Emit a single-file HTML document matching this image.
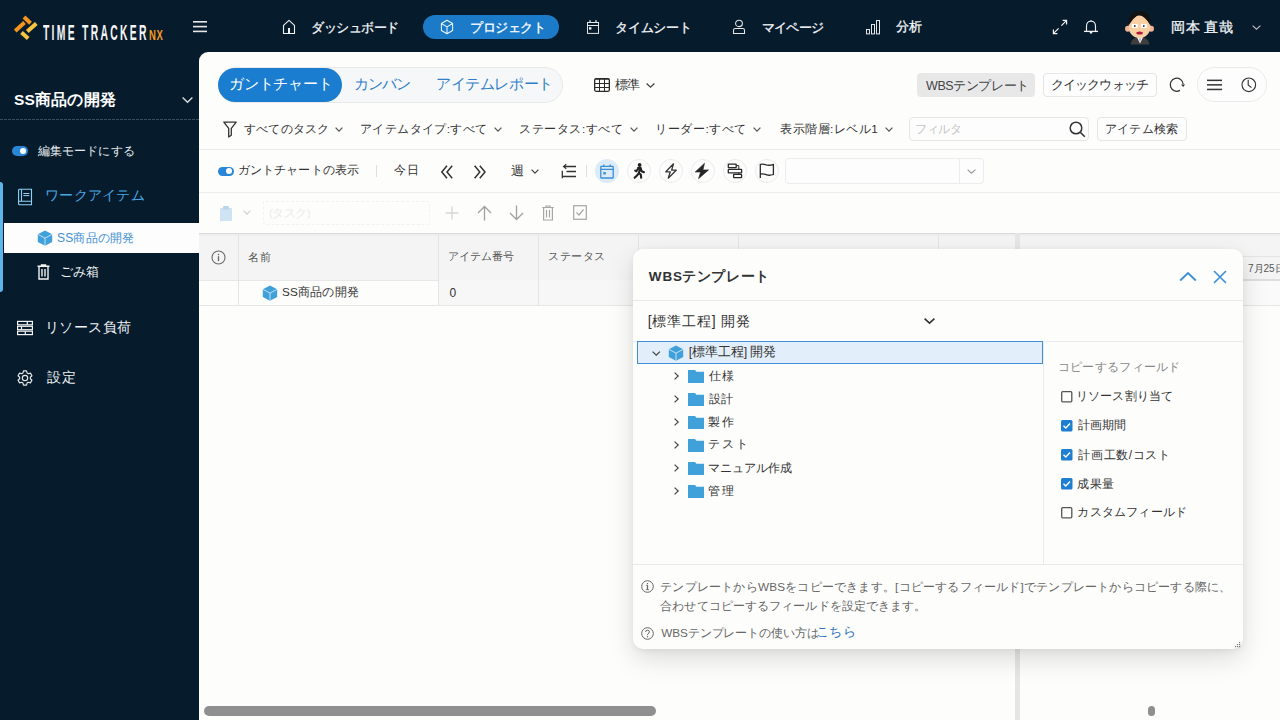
<!DOCTYPE html>
<html lang="ja"><head><meta charset="utf-8"><title>WBSテンプレート</title>
<style>
html,body{margin:0;padding:0;width:1280px;height:720px;overflow:hidden;background:#061c2d;}
body{position:relative;font-family:"Liberation Sans",sans-serif;}
.b{position:absolute;}
.i{position:absolute;overflow:visible;}
.t{position:absolute;white-space:nowrap;}
</style></head><body>
<div class="b" style="left:0px;top:0px;width:1280px;height:720px;background:#061c2d"></div><div class="b" style="left:199px;top:52px;width:1081px;height:668px;background:#fdfdfc;border-top-left-radius:9px;overflow:hidden"></div><svg class="i" style="left:10px;top:12px;" width="32" height="30" viewBox="0 0 32 30"><path d="M14 5 L20.5 11.2" stroke="#f7941d" stroke-width="4"/><path d="M5.2 19 L14.5 10.6" stroke="#f7941d" stroke-width="4"/><path d="M17.3 19.6 L26.3 11.4" stroke="#f9c440" stroke-width="4"/><path d="M11.5 20.6 L18.2 26.4" stroke="#f9c440" stroke-width="4"/></svg><span class="t" style="left:43px;top:20.6px;font-size:22.5px;line-height:24px;color:#f4f4f4;font-weight:bold;letter-spacing:5px;transform:scaleX(0.46);transform-origin:0 0">TIME TRACKER</span><span class="t" style="left:149px;top:27px;font-size:14px;line-height:16px;color:#f39a1e;font-weight:bold;letter-spacing:1px;transform:scaleX(0.68);transform-origin:0 0">NX</span><svg class="i" style="left:193px;top:20px;" width="14" height="13" viewBox="0 0 14 13"><rect x="0" y="1" width="14" height="1.6" fill="#e8e8e8"/><rect x="0" y="5.8" width="14" height="1.6" fill="#e8e8e8"/><rect x="0" y="10.6" width="14" height="1.6" fill="#e8e8e8"/></svg><svg class="i" style="left:282px;top:19px;" width="14" height="16" viewBox="0 0 14 16"><path d="M1.5 14.5 V6.3 L7 1.4 L12.5 6.3 V14.5 Z" fill="none" stroke="#f0f0f0" stroke-width="1.1" stroke-linejoin="round"/><rect x="6" y="9" width="2" height="5.6" fill="#f0f0f0"/></svg><div class="b" style="left:423px;top:15px;width:136px;height:24px;background:#1b7bc9;border-radius:12px"></div><svg class="i" style="left:440px;top:19px;" width="14" height="16" viewBox="0 0 14 16"><path d="M7 1.3 L12.6 4.5 V11.5 L7 14.7 L1.4 11.5 V4.5 Z M1.4 4.5 L7 7.9 L12.6 4.5 M7 7.9 V14.7" fill="none" stroke="#eef5fb" stroke-width="1.05" stroke-linejoin="round"/></svg><svg class="i" style="left:586px;top:19px;" width="14" height="16" viewBox="0 0 14 16"><rect x="1.5" y="3.5" width="11" height="10.9" fill="none" stroke="#e6e6e6" stroke-width="1"/><path d="M1.5 6.5 H12.5" stroke="#e6e6e6" stroke-width="1"/><rect x="3.4" y="1.2" width="1.3" height="2.5" fill="#e6e6e6"/><rect x="9.3" y="1.2" width="1.3" height="2.5" fill="#e6e6e6"/><rect x="3" y="8.2" width="2.4" height="2.4" fill="#f4f4f4"/></svg><svg class="i" style="left:732px;top:19px;" width="14" height="16" viewBox="0 0 14 16"><ellipse cx="7" cy="4.4" rx="3.4" ry="3.2" fill="none" stroke="#e6e6e6" stroke-width="1.05"/><path d="M1.5 14.5 V11.3 Q1.5 9.5 3.3 9.5 H10.7 Q12.5 9.5 12.5 11.3 V14.5 Z" fill="none" stroke="#e6e6e6" stroke-width="1.05"/></svg><svg class="i" style="left:865px;top:19px;" width="16" height="16" viewBox="0 0 16 16"><g fill="none" stroke="#e6e6e6" stroke-width="1"><rect x="1.5" y="10.5" width="3" height="4.4"/><rect x="6.5" y="5.5" width="3" height="9.4"/><rect x="11.5" y="1.5" width="3" height="13.4"/></g></svg><svg class="i" style="left:1052px;top:19px;" width="16" height="16" viewBox="0 0 16 16"><path d="M1.3 14.7 L6.6 9.4 M9.4 6.6 L14.7 1.3 M10.6 1.4 H14.6 V5.4 M1.4 10.6 V14.6 H5.4" fill="none" stroke="#f2f2f2" stroke-width="1.2"/></svg><svg class="i" style="left:1083px;top:19px;" width="16" height="16" viewBox="0 0 16 16"><path d="M3.5 12 V7.2 Q3.5 2.2 8 2.2 Q12.5 2.2 12.5 7.2 V12" fill="none" stroke="#eee" stroke-width="1.15"/><path d="M1 12.4 H15" stroke="#f2f2f2" stroke-width="1.3"/><path d="M6.4 13 L8 15.2 L9.6 13 Z" fill="#f2f2f2"/><rect x="7.4" y="1" width="1.2" height="1.4" fill="#ddd"/></svg><svg class="i" style="left:1120px;top:8px;" width="40" height="38" viewBox="0 0 40 38"><path d="M10.5 36.5 Q11.5 29 20 29 Q28.5 29 29.5 36.5 Z" fill="#3e3e3e"/><path d="M16.8 29 L20 35.5 L23.2 29 Z" fill="#f4f4f4"/><path d="M19.3 30.5 L20 35 L20.7 30.5 Z" fill="#9a80c8"/><ellipse cx="7.8" cy="20.8" rx="2.8" ry="3" fill="#f4b393"/><ellipse cx="31.2" cy="20.8" rx="2.8" ry="3" fill="#f4b393"/><ellipse cx="19.5" cy="18.8" rx="11" ry="11.2" fill="#f9cfa4"/><path d="M8.6 18 Q7.6 3 19.5 3 Q31.4 3 30.6 17 L29.8 16.5 Q25 8.5 18.5 6.6 Q13.5 10 9.6 16 Z" fill="#121212"/><rect x="11.8" y="16" width="6" height="4" rx="0.8" fill="#fff"/><rect x="20.8" y="16" width="6" height="4" rx="0.8" fill="#fff"/><circle cx="14.8" cy="18" r="0.9" fill="#333"/><circle cx="23.8" cy="18" r="0.9" fill="#333"/><ellipse cx="19.6" cy="25" rx="3.2" ry="1.5" fill="#b51a3c"/></svg><svg class="i" style="left:1252px;top:25px;" width="9" height="5" viewBox="0 0 9 5"><path d="M0.6 0.6 L4.5 4.2 L8.4 0.6" fill="none" stroke="#bbb" stroke-width="1.2"/></svg><span class="t" style="left:311.0px;top:21.5px;font-size:12.5px;line-height:12.5px;letter-spacing:-0.5px;color:#f4f6f8;font-weight:normal;-webkit-text-stroke:0.3px currentColor">ダッシュボード</span><span class="t" style="left:470.0px;top:22.0px;font-size:12.5px;line-height:12.5px;letter-spacing:-0.4px;color:#fff;font-weight:normal;-webkit-text-stroke:0.3px currentColor">プロジェクト</span><span class="t" style="left:615.0px;top:21.5px;font-size:12.5px;line-height:12.5px;letter-spacing:-0.2px;color:#f4f6f8;font-weight:normal;-webkit-text-stroke:0.3px currentColor">タイムシート</span><span class="t" style="left:762.0px;top:21.5px;font-size:12.5px;line-height:12.5px;letter-spacing:-0.8px;color:#f4f6f8;font-weight:normal;-webkit-text-stroke:0.3px currentColor">マイページ</span><span class="t" style="left:896.0px;top:21.0px;font-size:12.5px;line-height:12.5px;letter-spacing:0.0px;color:#f4f6f8;font-weight:normal;-webkit-text-stroke:0.3px currentColor">分析</span><span class="t" style="left:1171.0px;top:20.5px;font-size:13.5px;line-height:13.5px;letter-spacing:0.5px;color:#f4f6f8;font-weight:normal;-webkit-text-stroke:0.3px currentColor">岡本 直哉</span><span class="t" style="left:14.0px;top:92.0px;font-size:15.5px;line-height:15.5px;letter-spacing:0.2px;color:#fff;font-weight:bold;">SS商品の開発</span><svg class="i" style="left:182px;top:97px;" width="11" height="6" viewBox="0 0 11 6"><path d="M0.6 0.6 L5.5 5.2 L10.4 0.6" fill="none" stroke="#ddd" stroke-width="1.4"/></svg><div class="b" style="left:0px;top:119px;width:199px;height:1px;background:repeating-linear-gradient(90deg,#3a4b5b 0 3px,transparent 3px 4px)"></div><div class="b" style="left:12px;top:146px;width:16px;height:10px;background:#2a86d6;border-radius:5px"></div><div class="b" style="left:20.2px;top:148px;width:6.2px;height:6px;background:#fff;border-radius:50%"></div><span class="t" style="left:38.0px;top:146.0px;font-size:11.5px;line-height:11.5px;letter-spacing:0.1px;color:#e8ecef;font-weight:normal;">編集モードにする</span><div class="b" style="left:0px;top:182px;width:3px;height:110px;background:#5cb6ea;border-radius:0 3px 3px 0"></div><svg class="i" style="left:17px;top:188px;" width="16" height="18" viewBox="0 0 16 18"><g fill="none" stroke="#92d0f3" stroke-width="1.1"><path d="M1.6 2 Q1.6 1.2 2.6 1.2 H14.5 V16.8 H2.6 Q1.6 16.8 1.6 15.8 Z"/><path d="M4.5 1.2 V13.3 M1.6 13.3 H14.5"/><path d="M6.3 5.5 H12.4 M6.3 7.6 H12.4" stroke-width="1"/></g></svg><span class="t" style="left:45.0px;top:188.0px;font-size:14.0px;line-height:14.0px;letter-spacing:0.3px;color:#4aa6e3;font-weight:normal;">ワークアイテム</span><div class="b" style="left:4px;top:223px;width:195px;height:30px;background:#fdfdfd"></div><svg class="i" style="left:37px;top:230px;" width="16" height="16" viewBox="0 0 16 16"><path d="M8 0.5 L15.2 4.3 V12 L8 15.8 L0.8 12 V4.3 Z" fill="#40a0d9"/><path d="M0.8 4.3 L8 8.1 L15.2 4.3 M8 8.1 V15.8" fill="none" stroke="#cfe6f6" stroke-width="0.9"/></svg><span class="t" style="left:57.0px;top:231.5px;font-size:12.0px;line-height:12.0px;letter-spacing:0.2px;color:#3d8fd3;font-weight:normal;">SS商品の開発</span><svg class="i" style="left:37px;top:264px;" width="13" height="16" viewBox="0 0 13 16"><path d="M0.5 2.3 H12.5 M4.5 2.3 V1 H8.5 V2.3 M2 2.3 V15 H11 V2.3 M5 5 V12.5 M8 5 V12.5" fill="none" stroke="#f4f4f4" stroke-width="1.4"/></svg><span class="t" style="left:60.0px;top:265.5px;font-size:12.5px;line-height:12.5px;letter-spacing:0.0px;color:#f0f2f4;font-weight:normal;">ごみ箱</span><svg class="i" style="left:17px;top:320px;" width="16" height="16" viewBox="0 0 16 16"><g fill="none" stroke="#f4f4f4" stroke-width="1.2"><rect x="0.6" y="1.4" width="14.8" height="3.4"/><rect x="0.6" y="6.3" width="14.8" height="3.4"/><rect x="0.6" y="11.2" width="14.8" height="3.4"/><path d="M10.3 1.4 V4.8 M4.5 6.3 V9.7 M8.3 11.2 V14.6"/></g></svg><span class="t" style="left:45.0px;top:319.5px;font-size:14.0px;line-height:14.0px;letter-spacing:0.4px;color:#f0f2f4;font-weight:normal;">リソース負荷</span><svg class="i" style="left:17px;top:370px;" width="16" height="16" viewBox="0 0 16 16"><path d="M5.98 2.99 L6.48 0.86 L9.52 0.86 L10.02 2.99 L11.32 3.74 L13.42 3.12 L14.94 5.74 L13.35 7.25 L13.35 8.75 L14.94 10.26 L13.42 12.88 L11.32 12.26 L10.02 13.01 L9.52 15.14 L6.48 15.14 L5.98 13.01 L4.68 12.26 L2.58 12.88 L1.06 10.26 L2.65 8.75 L2.65 7.25 L1.06 5.74 L2.58 3.12 L4.68 3.74 Z" fill="none" stroke="#e8e8e8" stroke-width="1.15" stroke-linejoin="round"/><circle cx="8" cy="8" r="2.7" fill="none" stroke="#e8e8e8" stroke-width="1.15"/></svg><span class="t" style="left:47.0px;top:370.5px;font-size:13.5px;line-height:13.5px;letter-spacing:1.0px;color:#f0f2f4;font-weight:normal;">設定</span><div class="b" style="left:218px;top:67px;width:343px;height:34px;background:#f6f7f8;border:1px solid #e9e9e9;border-radius:18px"></div><div class="b" style="left:218px;top:68px;width:124px;height:34px;background:#1b7dcf;border-radius:17px"></div><span class="t" style="left:229.0px;top:77.0px;font-size:14.5px;line-height:14.5px;letter-spacing:-0.2px;color:#fff;font-weight:normal;">ガントチャート</span><span class="t" style="left:353.5px;top:76.5px;font-size:14.5px;line-height:14.5px;letter-spacing:-0.8px;color:#2f7fc9;font-weight:normal;">カンバン</span><span class="t" style="left:436.0px;top:77.0px;font-size:14.5px;line-height:14.5px;letter-spacing:-0.4px;color:#2f7fc9;font-weight:normal;">アイテムレポート</span><svg class="i" style="left:594px;top:78px;" width="16" height="14" viewBox="0 0 16 14"><rect x="0.65" y="0.65" width="14.7" height="12.7" rx="1.6" fill="none" stroke="#2a2a2a" stroke-width="1.3"/><path d="M0.8 1.1 H15.2" stroke="#2a2a2a" stroke-width="1.2"/><path d="M5.5 1 V13 M10.5 1 V13 M1 5.5 H15 M1 9.5 H15" stroke="#2a2a2a" stroke-width="1"/></svg><span class="t" style="left:615.0px;top:77.5px;font-size:13.0px;line-height:13.0px;letter-spacing:-1.0px;color:#333;font-weight:normal;">標準</span><svg class="i" style="left:646px;top:83px;" width="9" height="5" viewBox="0 0 9 5"><path d="M0.6 0.6 L4.5 4.2 L8.4 0.6" fill="none" stroke="#444" stroke-width="1.3"/></svg><div class="b" style="left:917px;top:73px;width:118px;height:24px;background:#e8e8e8;border-radius:4px"></div><span class="t" style="left:926.0px;top:80.0px;font-size:12.5px;line-height:12.5px;letter-spacing:-0.4px;color:#444;font-weight:normal;">WBSテンプレート</span><div class="b" style="left:1043px;top:73px;width:114px;height:24px;background:#fdfdfd;border:1px solid #e6e6e6;border-radius:4px;box-sizing:border-box"></div><span class="t" style="left:1051.0px;top:78.5px;font-size:12.5px;line-height:12.5px;letter-spacing:-0.9px;color:#333;font-weight:normal;">クイックウォッチ</span><svg class="i" style="left:1168px;top:77px;" width="17" height="16" viewBox="0 0 17 16"><path d="M15.2 7.2 A6.5 6.5 0 1 0 11.9 13.4" fill="none" stroke="#333" stroke-width="1.25"/><path d="M13 7.4 H17.2 L15.1 10 Z" fill="#333"/></svg><div class="b" style="left:1197px;top:67px;width:70px;height:35px;background:#fdfdfd;border:1px solid #ebebeb;border-radius:18px;box-sizing:border-box"></div><svg class="i" style="left:1206px;top:78px;" width="17" height="14" viewBox="0 0 17 14"><rect x="1" y="1.6" width="15" height="1.5" fill="#333"/><rect x="1" y="6.1" width="15" height="1.5" fill="#333"/><rect x="1" y="10.7" width="15" height="1.5" fill="#333"/></svg><svg class="i" style="left:1240px;top:76px;" width="18" height="18" viewBox="0 0 18 18"><circle cx="8.8" cy="8.8" r="6.8" fill="none" stroke="#333" stroke-width="1.15"/><path d="M8.2 3.8 V9 L11.5 11.6" fill="none" stroke="#333" stroke-width="1.15"/></svg><svg class="i" style="left:223px;top:120.5px;" width="14" height="17" viewBox="0 0 14 17"><path d="M0.8 1.1 H13.2 L8.3 7.4 V14.2 L5.7 16 V7.4 Z" fill="none" stroke="#333" stroke-width="1.3" stroke-linejoin="round"/></svg><span class="t" style="left:244.0px;top:122.5px;font-size:11.75px;line-height:11.75px;letter-spacing:0.2px;color:#333;font-weight:normal;">すべてのタスク</span><span class="t" style="left:360.0px;top:123.0px;font-size:11.75px;line-height:11.75px;letter-spacing:0.4px;color:#333;font-weight:normal;">アイテムタイプ:すべて</span><span class="t" style="left:519.0px;top:122.5px;font-size:11.75px;line-height:11.75px;letter-spacing:0.6px;color:#333;font-weight:normal;">ステータス:すべて</span><span class="t" style="left:655.0px;top:123.0px;font-size:11.75px;line-height:11.75px;letter-spacing:0.6px;color:#333;font-weight:normal;">リーダー:すべて</span><span class="t" style="left:780.0px;top:123.0px;font-size:11.75px;line-height:11.75px;letter-spacing:0.5px;color:#333;font-weight:normal;">表示階層:レベル1</span><svg class="i" style="left:334.5px;top:127px;" width="8" height="5" viewBox="0 0 8 5"><path d="M0.6 0.6 L4.0 4.2 L7.4 0.6" fill="none" stroke="#555" stroke-width="1.2"/></svg><svg class="i" style="left:493.5px;top:127px;" width="8" height="5" viewBox="0 0 8 5"><path d="M0.6 0.6 L4.0 4.2 L7.4 0.6" fill="none" stroke="#555" stroke-width="1.2"/></svg><svg class="i" style="left:629.5px;top:127px;" width="8" height="5" viewBox="0 0 8 5"><path d="M0.6 0.6 L4.0 4.2 L7.4 0.6" fill="none" stroke="#555" stroke-width="1.2"/></svg><svg class="i" style="left:752.5px;top:127px;" width="8" height="5" viewBox="0 0 8 5"><path d="M0.6 0.6 L4.0 4.2 L7.4 0.6" fill="none" stroke="#555" stroke-width="1.2"/></svg><svg class="i" style="left:884.5px;top:127px;" width="8" height="5" viewBox="0 0 8 5"><path d="M0.6 0.6 L4.0 4.2 L7.4 0.6" fill="none" stroke="#555" stroke-width="1.2"/></svg><div class="b" style="left:909px;top:117px;width:180px;height:24px;background:#fdfdfd;border:1px solid #e6e6e6;border-radius:4px;box-sizing:border-box"></div><span class="t" style="left:915.0px;top:123.5px;font-size:11.5px;line-height:11.5px;letter-spacing:-0.3px;color:#c4c4c4;font-weight:normal;">フィルタ</span><svg class="i" style="left:1069px;top:121px;" width="17" height="17" viewBox="0 0 17 17"><circle cx="7" cy="7" r="5.8" fill="none" stroke="#333" stroke-width="1.5"/><path d="M11.2 11.2 L15.8 15.8" stroke="#333" stroke-width="1.6"/></svg><div class="b" style="left:1097px;top:117px;width:90px;height:24px;background:#fdfdfd;border:1px solid #e6e6e6;border-radius:4px;box-sizing:border-box"></div><span class="t" style="left:1105.0px;top:122.5px;font-size:11.75px;line-height:11.75px;letter-spacing:0.2px;color:#333;font-weight:normal;">アイテム検索</span><div class="b" style="left:199px;top:149px;width:1081px;height:1px;background:#ececec"></div><div class="b" style="left:218px;top:166.5px;width:16px;height:9.5px;background:#2a86d6;border-radius:5px"></div><div class="b" style="left:226px;top:168.2px;width:6.2px;height:6.2px;background:#fff;border-radius:50%"></div><span class="t" style="left:238.0px;top:164.0px;font-size:12.25px;line-height:12.25px;letter-spacing:0.1px;color:#333;font-weight:normal;">ガントチャートの表示</span><div class="b" style="left:376px;top:165px;width:1px;height:12px;background:#dedede"></div><span class="t" style="left:394.0px;top:164.0px;font-size:12.25px;line-height:12.25px;letter-spacing:1.0px;color:#333;font-weight:normal;">今日</span><svg class="i" style="left:440px;top:165px;" width="15" height="14" viewBox="0 0 15 14"><path d="M7 0.8 L1.8 7 L7 13.2 M12.2 0.8 L7 7 L12.2 13.2" fill="none" stroke="#333" stroke-width="1.5"/></svg><svg class="i" style="left:472px;top:165px;" width="15" height="14" viewBox="0 0 15 14"><path d="M2.6 0.8 L7.8 7 L2.6 13.2 M7.8 0.8 L13 7 L7.8 13.2" fill="none" stroke="#333" stroke-width="1.5"/></svg><span class="t" style="left:511.0px;top:165.0px;font-size:12.5px;line-height:12.5px;letter-spacing:0.0px;color:#333;font-weight:normal;">週</span><svg class="i" style="left:531px;top:169px;" width="8" height="5" viewBox="0 0 8 5"><path d="M0.6 0.6 L4.0 4.2 L7.4 0.6" fill="none" stroke="#444" stroke-width="1.2"/></svg><svg class="i" style="left:561px;top:163px;" width="16" height="16" viewBox="0 0 16 16"><path d="M2.8 3.5 H15 M5.5 8.5 H15 M1.3 13.5 H15 M1.3 7.8 V15.2" fill="none" stroke="#333" stroke-width="1.3"/><path d="M5.3 1.2 L2.6 3.5 L5.3 5.8" fill="none" stroke="#333" stroke-width="1.2"/></svg><div class="b" style="left:585.5px;top:165px;width:1px;height:12px;background:#dedede"></div><div class="b" style="left:595px;top:159px;width:24px;height:24px;background:#dcebf8;border-radius:50%"></div><div class="b" style="left:626.5px;top:159px;width:24px;height:24px;background:#fdfdfd;border:1px solid #ebebeb;border-radius:50%;box-sizing:border-box"></div><div class="b" style="left:658.6px;top:159px;width:24px;height:24px;background:#fdfdfd;border:1px solid #ebebeb;border-radius:50%;box-sizing:border-box"></div><div class="b" style="left:690.7px;top:159px;width:24px;height:24px;background:#fdfdfd;border:1px solid #ebebeb;border-radius:50%;box-sizing:border-box"></div><div class="b" style="left:722.5px;top:159px;width:24px;height:24px;background:#fdfdfd;border:1px solid #ebebeb;border-radius:50%;box-sizing:border-box"></div><div class="b" style="left:754.7px;top:159px;width:24px;height:24px;background:#fdfdfd;border:1px solid #ebebeb;border-radius:50%;box-sizing:border-box"></div><svg class="i" style="left:600px;top:164px;" width="14" height="15" viewBox="0 0 14 15"><rect x="0.8" y="2.3" width="12.4" height="11.7" rx="0.5" fill="none" stroke="#3a8ed6" stroke-width="1.3"/><path d="M0.8 5.3 H13.2 M3.8 0.5 V3 M10.2 0.5 V3" stroke="#3a8ed6" stroke-width="1.3"/><rect x="3.3" y="8" width="2.5" height="2.5" fill="#3a8ed6"/></svg><svg class="i" style="left:632px;top:163px;" width="14" height="16" viewBox="0 0 14 16"><circle cx="7.6" cy="2" r="1.9" fill="#222"/><path d="M6 5 L8.6 4.8 L9.6 8.2 L12 9.2 M6.3 5.2 L4.4 8.2 L3.2 7.6 M8.2 5.5 L6.8 10 L8.8 11.6 L9.2 14.8 M6.8 10 L5 12.6 L2.6 14.8" fill="none" stroke="#222" stroke-width="2.1" stroke-linecap="round" stroke-linejoin="round"/></svg><svg class="i" style="left:664px;top:163px;" width="14" height="16" viewBox="0 0 14 16"><path d="M9.5 0.8 L1.8 8.8 H6.3 L4.2 15.2 L12.2 7.2 H7.6 Z" fill="none" stroke="#333" stroke-width="1.25" stroke-linejoin="round"/></svg><svg class="i" style="left:694px;top:163px;" width="16" height="16" viewBox="0 0 16 16"><path d="M10.5 0.3 L1.2 9 H6.6 L4.5 15.7 L14.6 6.9 H9 Z" fill="#262626" stroke="#262626" stroke-width="0.6" stroke-linejoin="round"/></svg><svg class="i" style="left:727px;top:163px;" width="16" height="16" viewBox="0 0 16 16"><g fill="none" stroke="#2a2a2a" stroke-width="1.3"><rect x="1.3" y="1.2" width="7.9" height="3.4" rx="0.4"/><rect x="1.3" y="6.3" width="13.3" height="3.5" rx="0.4"/><rect x="6.6" y="11.3" width="8" height="3.4" rx="0.4"/><path d="M9.2 2.6 H11.8 V6.3 M11.8 9.8 V11.3" stroke-width="1"/></g></svg><svg class="i" style="left:759px;top:163px;" width="16" height="16" viewBox="0 0 16 16"><path d="M1.3 1 V15 M1.3 1.3 Q4.2 0.6 7.2 1.8 Q10.4 2.9 14.4 1.3 V11.5 Q10.4 12.9 7.2 11.7 Q4.2 10.5 1.3 11.2" fill="none" stroke="#2a2a2a" stroke-width="1.3" stroke-linejoin="round"/></svg><div class="b" style="left:784.5px;top:158px;width:199px;height:26px;background:#fdfdfd;border:1px solid #ececec;border-radius:4px;box-sizing:border-box"></div><div class="b" style="left:959px;top:159px;width:1px;height:24px;background:#ededed"></div><svg class="i" style="left:966.5px;top:168.5px;" width="9" height="5" viewBox="0 0 9 5"><path d="M0.6 0.6 L4.5 4.2 L8.4 0.6" fill="none" stroke="#999" stroke-width="1.2"/></svg><div class="b" style="left:199px;top:192px;width:1081px;height:1px;background:#ececec"></div><svg class="i" style="left:219px;top:205px;" width="14" height="17" viewBox="0 0 14 17"><path d="M1 3 H13 V16 H1 Z" fill="#cfe3f2"/><rect x="4" y="1" width="6" height="3.5" rx="1" fill="#b9d6ec"/></svg><svg class="i" style="left:242.5px;top:210px;" width="8" height="5" viewBox="0 0 8 5"><path d="M0.6 0.6 L4.0 4.2 L7.4 0.6" fill="none" stroke="#d0d0d0" stroke-width="1.1"/></svg><div class="b" style="left:263px;top:200.5px;width:167px;height:24px;border:1px dashed #f2f2f2;border-radius:3px;box-sizing:border-box"></div><span class="t" style="left:269.0px;top:207.5px;font-size:11.5px;line-height:11.5px;letter-spacing:-0.5px;color:#ebebeb;font-weight:normal;">(タスク)</span><svg class="i" style="left:445px;top:206px;" width="14" height="14" viewBox="0 0 14 14"><path d="M7 0.5 V13.5 M0.5 7 H13.5" stroke="#d6d6d6" stroke-width="1.3"/></svg><svg class="i" style="left:477px;top:205px;" width="15" height="16" viewBox="0 0 15 16"><path d="M7.5 15.5 V1.5 M1 8 L7.5 1.5 L14 8" fill="none" stroke="#a0a0a0" stroke-width="1.3"/></svg><svg class="i" style="left:509px;top:205px;" width="15" height="16" viewBox="0 0 15 16"><path d="M7.5 0.5 V14.5 M1 8 L7.5 14.5 L14 8" fill="none" stroke="#a0a0a0" stroke-width="1.3"/></svg><svg class="i" style="left:542px;top:205px;" width="12" height="16" viewBox="0 0 12 16"><path d="M0.3 2.5 H11.7 M4 2.5 V1 H8 V2.5 M1.6 2.5 V15 H10.4 V2.5 M4.5 5 V12.5 M7.5 5 V12.5" fill="none" stroke="#a6a6a6" stroke-width="1.2"/></svg><svg class="i" style="left:573px;top:205px;" width="14" height="15" viewBox="0 0 14 15"><rect x="0.7" y="0.7" width="12.6" height="13.6" fill="none" stroke="#a6a6a6" stroke-width="1.2"/><path d="M3.5 7.5 L6 10 L10.5 4.5" fill="none" stroke="#a6a6a6" stroke-width="1.2"/></svg><div class="b" style="left:199px;top:233px;width:1081px;height:47px;background:#f4f4f4"></div><div class="b" style="left:199px;top:232.5px;width:1081px;height:1.5px;background:#dadada"></div><div class="b" style="left:199px;top:234px;width:1081px;height:3px;background:linear-gradient(#ebebeb,#f4f4f4)"></div><div class="b" style="left:199px;top:279.5px;width:816px;height:1px;background:#e6e6e6"></div><div class="b" style="left:438px;top:280px;width:577px;height:25px;background:#f7f7f7"></div><div class="b" style="left:199px;top:305px;width:816px;height:1px;background:#e6e6e6"></div><div class="b" style="left:238px;top:233px;width:1px;height:72px;background:#e4e4e4"></div><div class="b" style="left:438px;top:233px;width:1px;height:72px;background:#e4e4e4"></div><div class="b" style="left:538px;top:233px;width:1px;height:72px;background:#e4e4e4"></div><div class="b" style="left:638px;top:233px;width:1px;height:72px;background:#e4e4e4"></div><div class="b" style="left:738px;top:233px;width:1px;height:72px;background:#e4e4e4"></div><div class="b" style="left:938px;top:233px;width:1px;height:72px;background:#e4e4e4"></div><svg class="i" style="left:211px;top:250px;" width="15" height="15" viewBox="0 0 15 15"><circle cx="7.5" cy="7.5" r="6.5" fill="none" stroke="#6a6a6a" stroke-width="1.1"/><rect x="6.85" y="6.2" width="1.3" height="5" fill="#6a6a6a"/><rect x="6.85" y="3.8" width="1.3" height="1.4" fill="#6a6a6a"/></svg><span class="t" style="left:248.0px;top:252.0px;font-size:11.25px;line-height:11.25px;letter-spacing:1.2px;color:#555;font-weight:normal;">名前</span><span class="t" style="left:448.4px;top:251.4px;font-size:11.25px;line-height:11.25px;letter-spacing:0.0px;color:#555;font-weight:normal;">アイテム番号</span><span class="t" style="left:548.0px;top:250.9px;font-size:11.25px;line-height:11.25px;letter-spacing:0.5px;color:#555;font-weight:normal;">ステータス</span><svg class="i" style="left:262px;top:285px;" width="16" height="16" viewBox="0 0 16 16"><path d="M8 0.5 L15.2 4.3 V12 L8 15.8 L0.8 12 V4.3 Z" fill="#40a0d9"/><path d="M0.8 4.3 L8 8.1 L15.2 4.3 M8 8.1 V15.8" fill="none" stroke="#cfe6f6" stroke-width="0.9"/></svg><span class="t" style="left:282.0px;top:286.2px;font-size:11.75px;line-height:11.75px;letter-spacing:0.2px;color:#333;font-weight:normal;">SS商品の開発</span><span class="t" style="left:449.6px;top:286.8px;font-size:12.0px;line-height:12.0px;letter-spacing:0.0px;color:#333;font-weight:normal;">0</span><div class="b" style="left:1015px;top:233px;width:5px;height:487px;background:#e6e6e6"></div><div class="b" style="left:1020px;top:256px;width:260px;height:1px;background:#e3e3e3"></div><div class="b" style="left:1020px;top:279px;width:260px;height:1.5px;background:#dedede"></div><div class="b" style="left:1020px;top:280.5px;width:260px;height:24.5px;background:#fafafa"></div><div class="b" style="left:1020px;top:305px;width:260px;height:1px;background:#e6e6e6"></div><span class="t" style="left:1248.0px;top:263.5px;font-size:10.0px;line-height:10.0px;letter-spacing:0.0px;color:#555;font-weight:normal;">7月25日</span><div class="b" style="left:204px;top:706px;width:452px;height:10px;background:#8f8f8f;border-radius:5px"></div><div class="b" style="left:1148px;top:706px;width:7px;height:10px;background:#8f8f8f;border-radius:4px"></div>
<div class="b" style="left:633px;top:249px;width:610px;height:400px;background:#fdfdfc;border-radius:10px;box-shadow:0 10px 26px rgba(0,0,0,0.13),0 2px 6px rgba(0,0,0,0.06)"></div><span class="t" style="left:648.8px;top:269.6px;font-size:13.5px;line-height:13.5px;letter-spacing:0.9px;color:#333;font-weight:bold;">WBS</span><span class="t" style="left:682.2px;top:268.6px;font-size:14.0px;line-height:14.0px;letter-spacing:0.6px;color:#333;font-weight:bold;">テンプレート</span><svg class="i" style="left:1179px;top:271px;" width="18" height="11" viewBox="0 0 18 11"><path d="M1.2 9.5 L9 2 L16.8 9.5" fill="none" stroke="#3a8fd6" stroke-width="1.8"/></svg><svg class="i" style="left:1213px;top:270px;" width="14" height="14" viewBox="0 0 14 14"><path d="M1 1 L13 13 M13 1 L1 13" stroke="#3a8fd6" stroke-width="1.6"/></svg><div class="b" style="left:633px;top:300px;width:610px;height:1px;background:#e8e8e8"></div><span class="t" style="left:647.8px;top:313.6px;font-size:14.0px;line-height:14.0px;letter-spacing:0.8px;color:#333;font-weight:normal;">[標準工程] 開発</span><svg class="i" style="left:923.5px;top:318px;" width="11" height="6" viewBox="0 0 11 6"><path d="M0.6 0.6 L5.5 5.2 L10.4 0.6" fill="none" stroke="#333" stroke-width="1.6"/></svg><div class="b" style="left:633px;top:340.5px;width:610px;height:1px;background:#ebebeb"></div><div class="b" style="left:637px;top:341px;width:406px;height:23px;background:#e2eef9;border:1px solid #3f90d9;box-sizing:border-box"></div><svg class="i" style="left:651.5px;top:350.5px;" width="8.5" height="5" viewBox="0 0 8.5 5"><path d="M0.6 0.6 L4.25 4.2 L7.9 0.6" fill="none" stroke="#444" stroke-width="1.3"/></svg><svg class="i" style="left:668px;top:344.5px;" width="16" height="16" viewBox="0 0 16 16"><path d="M8 0.5 L15.2 4.3 V12 L8 15.8 L0.8 12 V4.3 Z" fill="#40a0d9"/><path d="M0.8 4.3 L8 8.1 L15.2 4.3 M8 8.1 V15.8" fill="none" stroke="#cfe6f6" stroke-width="0.9"/></svg><span class="t" style="left:688.7px;top:346.4px;font-size:12.5px;line-height:12.5px;letter-spacing:-0.1px;color:#333;font-weight:normal;">[標準工程] 開発</span><svg class="i" style="left:673.5px;top:371.8px;" width="5" height="8" viewBox="0 0 5 8"><path d="M0.6 0.6 L4.2 4 L0.6 7.4" fill="none" stroke="#444" stroke-width="1.2"/></svg><svg class="i" style="left:688px;top:369px;" width="16" height="14" viewBox="0 0 16 14"><path d="M0 1 H7 L8.5 2.8 H16 V14 H0 Z" fill="#40a0d9"/></svg><svg class="i" style="left:673.5px;top:394.8px;" width="5" height="8" viewBox="0 0 5 8"><path d="M0.6 0.6 L4.2 4 L0.6 7.4" fill="none" stroke="#444" stroke-width="1.2"/></svg><svg class="i" style="left:688px;top:392px;" width="16" height="14" viewBox="0 0 16 14"><path d="M0 1 H7 L8.5 2.8 H16 V14 H0 Z" fill="#40a0d9"/></svg><svg class="i" style="left:673.5px;top:417.8px;" width="5" height="8" viewBox="0 0 5 8"><path d="M0.6 0.6 L4.2 4 L0.6 7.4" fill="none" stroke="#444" stroke-width="1.2"/></svg><svg class="i" style="left:688px;top:415px;" width="16" height="14" viewBox="0 0 16 14"><path d="M0 1 H7 L8.5 2.8 H16 V14 H0 Z" fill="#40a0d9"/></svg><svg class="i" style="left:673.5px;top:440.8px;" width="5" height="8" viewBox="0 0 5 8"><path d="M0.6 0.6 L4.2 4 L0.6 7.4" fill="none" stroke="#444" stroke-width="1.2"/></svg><svg class="i" style="left:688px;top:438px;" width="16" height="14" viewBox="0 0 16 14"><path d="M0 1 H7 L8.5 2.8 H16 V14 H0 Z" fill="#40a0d9"/></svg><svg class="i" style="left:673.5px;top:463.8px;" width="5" height="8" viewBox="0 0 5 8"><path d="M0.6 0.6 L4.2 4 L0.6 7.4" fill="none" stroke="#444" stroke-width="1.2"/></svg><svg class="i" style="left:688px;top:461px;" width="16" height="14" viewBox="0 0 16 14"><path d="M0 1 H7 L8.5 2.8 H16 V14 H0 Z" fill="#40a0d9"/></svg><svg class="i" style="left:673.5px;top:486.8px;" width="5" height="8" viewBox="0 0 5 8"><path d="M0.6 0.6 L4.2 4 L0.6 7.4" fill="none" stroke="#444" stroke-width="1.2"/></svg><svg class="i" style="left:688px;top:484px;" width="16" height="14" viewBox="0 0 16 14"><path d="M0 1 H7 L8.5 2.8 H16 V14 H0 Z" fill="#40a0d9"/></svg><span class="t" style="left:709.2px;top:370.4px;font-size:12.25px;line-height:12.25px;letter-spacing:0.4px;color:#333;font-weight:normal;">仕様</span><span class="t" style="left:709.2px;top:393.4px;font-size:12.25px;line-height:12.25px;letter-spacing:-0.6px;color:#333;font-weight:normal;">設計</span><span class="t" style="left:708.2px;top:416.4px;font-size:12.25px;line-height:12.25px;letter-spacing:1.8px;color:#333;font-weight:normal;">製作</span><span class="t" style="left:708.2px;top:438.4px;font-size:12.25px;line-height:12.25px;letter-spacing:1.8px;color:#333;font-weight:normal;">テスト</span><span class="t" style="left:708.2px;top:462.4px;font-size:12.25px;line-height:12.25px;letter-spacing:0.0px;color:#333;font-weight:normal;">マニュアル作成</span><span class="t" style="left:708.2px;top:485.4px;font-size:12.25px;line-height:12.25px;letter-spacing:1.8px;color:#333;font-weight:normal;">管理</span><div class="b" style="left:1043px;top:341px;width:1px;height:223px;background:#ebebeb"></div><span class="t" style="left:1057.8px;top:361.2px;font-size:11.75px;line-height:11.75px;letter-spacing:0.3px;color:#888;font-weight:normal;">コピーするフィールド</span><svg class="i" style="left:1061px;top:391px;" width="11.5" height="11.5" viewBox="0 0 11.5 11.5"><rect x="0.7" y="0.7" width="10.1" height="10.1" rx="1" fill="none" stroke="#555" stroke-width="1.3"/></svg><svg class="i" style="left:1061px;top:420px;" width="11.5" height="11.5" viewBox="0 0 11.5 11.5"><rect x="0" y="0" width="11.5" height="11.5" rx="1.5" fill="#1e7fd2"/><path d="M2.5 5.8 L4.8 8 L9 3.5" fill="none" stroke="#fff" stroke-width="1.4"/></svg><svg class="i" style="left:1061px;top:449px;" width="11.5" height="11.5" viewBox="0 0 11.5 11.5"><rect x="0" y="0" width="11.5" height="11.5" rx="1.5" fill="#1e7fd2"/><path d="M2.5 5.8 L4.8 8 L9 3.5" fill="none" stroke="#fff" stroke-width="1.4"/></svg><svg class="i" style="left:1061px;top:478px;" width="11.5" height="11.5" viewBox="0 0 11.5 11.5"><rect x="0" y="0" width="11.5" height="11.5" rx="1.5" fill="#1e7fd2"/><path d="M2.5 5.8 L4.8 8 L9 3.5" fill="none" stroke="#fff" stroke-width="1.4"/></svg><svg class="i" style="left:1061px;top:507px;" width="11.5" height="11.5" viewBox="0 0 11.5 11.5"><rect x="0.7" y="0.7" width="10.1" height="10.1" rx="1" fill="none" stroke="#555" stroke-width="1.3"/></svg><span class="t" style="left:1076.2px;top:390.1px;font-size:12.0px;line-height:12.0px;letter-spacing:0.1px;color:#333;font-weight:normal;">リソース割り当て</span><span class="t" style="left:1078.4px;top:419.1px;font-size:12.0px;line-height:12.0px;letter-spacing:-0.1px;color:#333;font-weight:normal;">計画期間</span><span class="t" style="left:1078.4px;top:448.6px;font-size:12.0px;line-height:12.0px;letter-spacing:0.6px;color:#333;font-weight:normal;">計画工数/コスト</span><span class="t" style="left:1077.4px;top:477.6px;font-size:12.0px;line-height:12.0px;letter-spacing:0.3px;color:#333;font-weight:normal;">成果量</span><span class="t" style="left:1077.4px;top:505.6px;font-size:12.0px;line-height:12.0px;letter-spacing:0.2px;color:#333;font-weight:normal;">カスタムフィールド</span><div class="b" style="left:633px;top:564px;width:610px;height:1px;background:#e8e8e8"></div><svg class="i" style="left:641px;top:580px;" width="13" height="13" viewBox="0 0 13 13"><circle cx="6.5" cy="6.5" r="5.8" fill="none" stroke="#666" stroke-width="1"/><rect x="5.9" y="5.2" width="1.2" height="4.6" fill="#666"/><rect x="5.9" y="3" width="1.2" height="1.2" fill="#666"/><path d="M4.9 5.3 H6.5 M4.9 9.7 H8.2" stroke="#666" stroke-width="0.8"/></svg><span class="t" style="left:660.3px;top:580.5px;font-size:11.75px;line-height:11.75px;letter-spacing:0.2px;color:#666;font-weight:normal;">テンプレートからWBSをコピーできます。[コピーするフィールド]でテンプレートからコピーする際に、</span><span class="t" style="left:660.3px;top:600.2px;font-size:11.75px;line-height:11.75px;letter-spacing:0.1px;color:#666;font-weight:normal;">合わせてコピーするフィールドを設定できます。</span><svg class="i" style="left:641px;top:626.5px;" width="13" height="13" viewBox="0 0 13 13"><circle cx="6.5" cy="6.5" r="5.8" fill="none" stroke="#666" stroke-width="1"/><path d="M4.6 5 Q4.6 3.2 6.5 3.2 Q8.4 3.2 8.4 4.9 Q8.4 6 6.9 6.8 Q6.5 7.1 6.5 8.2" fill="none" stroke="#666" stroke-width="1"/><rect x="5.9" y="9.2" width="1.2" height="1.2" fill="#666"/></svg><span class="t" style="left:661.3px;top:626.5px;font-size:11.75px;line-height:11.75px;letter-spacing:-0.1px;color:#666;font-weight:normal;">WBSテンプレートの使い方は</span><span class="t" style="left:816.0px;top:626.3px;font-size:12.75px;line-height:12.75px;letter-spacing:0.3px;color:#2f6fc0;font-weight:normal;">こちら</span><svg class="i" style="left:1234px;top:642px;" width="7" height="6" viewBox="0 0 7 6"><rect x="5" y="0" width="1.2" height="1.2" fill="#777"/><rect x="3" y="2" width="1.2" height="1.2" fill="#777"/><rect x="5" y="2" width="1.2" height="1.2" fill="#777"/><rect x="1" y="4" width="1.2" height="1.2" fill="#777"/><rect x="3" y="4" width="1.2" height="1.2" fill="#777"/><rect x="5" y="4" width="1.2" height="1.2" fill="#777"/></svg>
</body></html>
